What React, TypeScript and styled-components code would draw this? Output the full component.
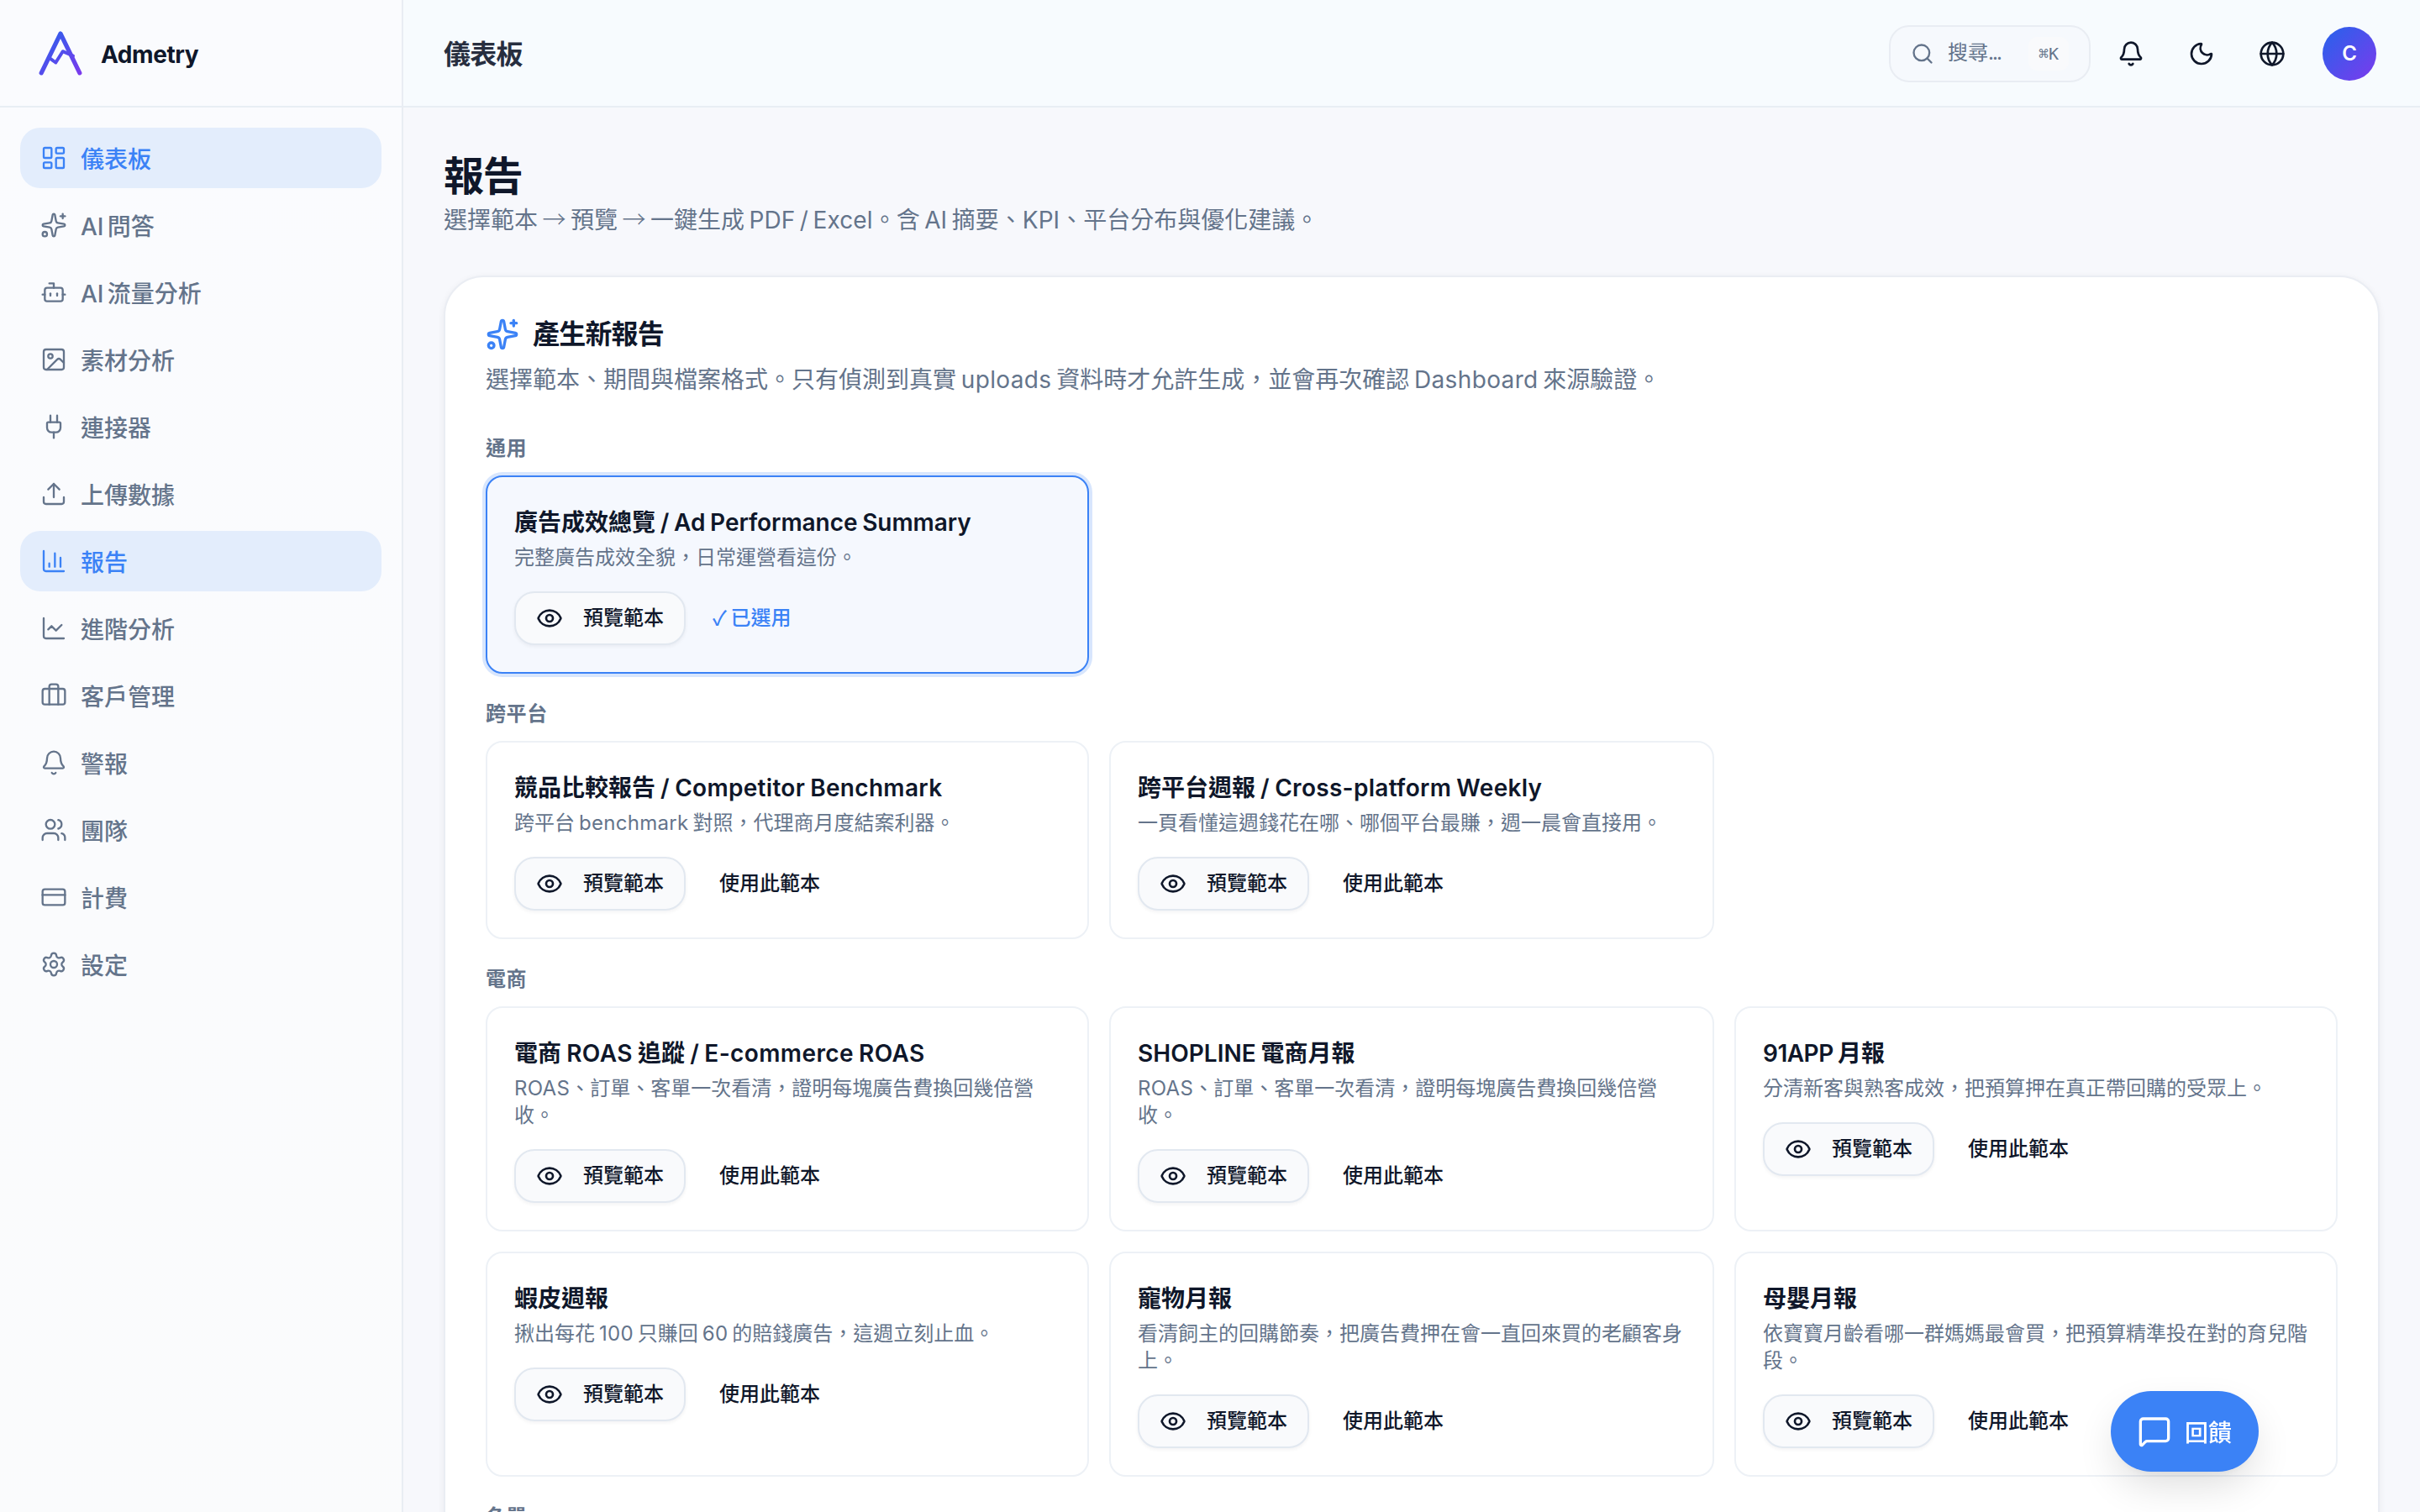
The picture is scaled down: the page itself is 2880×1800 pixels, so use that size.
import React from "react";
import styled, { createGlobalStyle, css } from "styled-components";
import {
  LayoutDashboard, Sparkles, Bot, Image, Plug, Upload, ChartColumn, ChartLine,
  Briefcase, Bell, Users, CreditCard, Settings, Search, Moon, Globe, Eye, MessageSquare,
} from "lucide-react";

const colors = {
  text: "#0f172a",
  muted: "#64748b",
  primary: "#3b82f6",
  line: "#e8eef4",
  page: "#f7f8fc",
};

const GlobalStyle = createGlobalStyle`
  *, *::before, *::after { box-sizing: border-box; }
  html, body { margin: 0; padding: 0; overflow: hidden; }
  body {
    background: ${colors.page};
    color: ${colors.text};
    font-family: Inter, "Noto Sans CJK TC", sans-serif;
    font-size: 28px;
    line-height: 40px;
    -webkit-font-smoothing: antialiased;
  }
  h1, h2, h3, p { margin: 0; }
  button { font: inherit; color: inherit; border: 0; background: none; padding: 0; }
  svg { display: block; flex-shrink: 0; }
`;

const Shell = styled.div`
  display: grid;
  grid-template-columns: 480px 1fr;
  width: 2880px;
  height: 1800px;
  overflow: hidden;
`;

const Sidebar = styled.aside`
  border-right: 2px solid #e9edf3;
  background: linear-gradient(#fafbfe, #fafbfc);
`;

const Brand = styled.div`
  display: flex;
  align-items: center;
  gap: 16px;
  height: 128px;
  padding: 0 40px;
  border-bottom: 2px solid ${colors.line};
`;

const BrandName = styled.span`
  padding-top: 4px;
  font-size: 28px;
  font-weight: 700;
  letter-spacing: -0.015em;
`;

const Nav = styled.nav`
  display: flex;
  flex-direction: column;
  gap: 8px;
  padding: 24px;
`;

const NavItem = styled.a<{ $active?: boolean }>`
  display: flex;
  align-items: center;
  gap: 16px;
  height: 72px;
  padding: 0 24px;
  border-radius: 24px;
  font-weight: 500;
  color: ${(p) => (p.$active ? colors.primary : colors.muted)};
  background: ${(p) => (p.$active ? "#e3edfc" : "transparent")};
`;

const NavLabel = styled.span`
  padding-top: 3px;
`;

const Column = styled.div`
  display: flex;
  flex-direction: column;
  min-width: 0;
`;

const Topbar = styled.header`
  display: flex;
  align-items: center;
  justify-content: space-between;
  height: 128px;
  flex-shrink: 0;
  padding: 2px 52px 0 48px;
  border-bottom: 2px solid ${colors.line};
  background: #f7fbfe;
`;

const TopTitle = styled.h2`
  padding-top: 1px;
  font-size: 32px;
  font-weight: 600;
  letter-spacing: -0.025em;
  color: #272e3f;
`;

const Tools = styled.div`
  display: flex;
  align-items: center;
  gap: 12px;
`;

const SearchBox = styled.div`
  display: flex;
  align-items: center;
  gap: 16px;
  width: 240px;
  height: 68px;
  padding: 0 24px;
  border: 2px solid #e9edf3;
  border-radius: 24px;
  background: #f6f9fd;
  color: ${colors.muted};
  font-size: 24px;
  line-height: 36px;
`;

const SearchHint = styled.span`
  padding-bottom: 2px;
`;

const Dots = styled.span`
  letter-spacing: -0.08em;
`;

const Kbd = styled.kbd`
  display: flex;
  align-items: center;
  height: 40px;
  margin-left: auto;
  padding: 0 12px;
  border-radius: 10px;
  background: #f9fafc;
  font-family: "DejaVu Sans Mono", monospace;
  font-size: 20px;
`;

const IconButton = styled.button`
  display: grid;
  place-items: center;
  width: 72px;
  height: 72px;
`;

const Avatar = styled.div`
  display: grid;
  place-items: center;
  width: 64px;
  height: 64px;
  margin-left: 12px;
  border-radius: 50%;
  background: linear-gradient(135deg, #2563eb, #7c3aed);
  color: #fff;
  font-size: 24px;
  font-weight: 600;
`;

const Main = styled.main`
  padding: 48px;
`;

const PageTitle = styled.h1`
  font-size: 48px;
  line-height: 68px;
  font-weight: 700;
  letter-spacing: -0.025em;
`;

const LatinRun = styled.span<{ $tracking: number }>`
  line-height: 0;
  letter-spacing: ${(p) => p.$tracking}em;
  word-spacing: -0.09em;
`;

const Arrow = styled.span`
  line-height: 0;
  font-family: "Noto Sans CJK TC", sans-serif;
  font-weight: 300;
`;

const Lead = styled.p`
  line-height: 36px;
  color: ${colors.muted};

  ${LatinRun} {
    font-weight: 375;
  }
`;

const Panel = styled.section`
  margin-top: 48px;
  padding: 48px;
  height: 1700px;
  border: 2px solid #eaedf3;
  border-radius: 48px;
  background: #fff;
  box-shadow: 0 2px 8px rgba(15, 23, 42, 0.06);
`;

const PanelHead = styled.div`
  display: flex;
  align-items: center;
  gap: 16px;
  height: 40px;
  color: ${colors.primary};
`;

const PanelTitle = styled.h2`
  font-size: 32px;
  font-weight: 700;
  letter-spacing: -0.025em;
  color: ${colors.text};
`;

const PanelLead = styled(Lead)`
  margin: 16px 0 48px;
`;

const Group = styled.div`
  margin-bottom: 32px;
`;

const GroupLabel = styled.h3`
  margin-bottom: 16px;
  font-size: 24px;
  line-height: 32px;
  font-weight: 600;
  letter-spacing: 0.025em;
  color: ${colors.muted};
`;

const CardGrid = styled.div`
  display: grid;
  grid-template-columns: 718fr 720fr 718fr;
  gap: 24px;
`;

const Card = styled.article<{ $selected?: boolean }>`
  padding: 32px;
  border: 2px solid #edf1f6;
  border-radius: 20px;
  background: #fff;
  ${(p) =>
    p.$selected &&
    css`
      border-color: ${colors.primary};
      background: #f5f8fe;
      box-shadow: 0 0 0 4px #d8e6fd;
    `}
`;

const CardTitle = styled.h3`
  font-size: 28px;
  line-height: 44px;
  font-weight: 600;

  ${LatinRun} {
    font-weight: 560;
    word-spacing: -0.045em;
  }
`;

const CardText = styled.p`
  margin: 4px 0 24px;
  font-size: 24px;
  line-height: 32px;
  color: ${colors.muted};

  ${LatinRun} {
    font-weight: 375;
  }
`;

const Actions = styled.div`
  display: flex;
  align-items: center;
  gap: 16px;
  font-size: 24px;
  line-height: 32px;
  font-weight: 500;
`;

const PreviewButton = styled.button`
  display: flex;
  align-items: center;
  gap: 24px;
  height: 64px;
  padding: 0 24px;
  border: 2px solid #e2e8f0;
  border-radius: 24px;
  background: #f9fafc;
  box-shadow: 0 2px 4px rgba(15, 23, 42, 0.05);
`;

const UseButton = styled.button`
  height: 64px;
  padding: 0 24px;
`;

const Chosen = styled.span`
  padding: 0 16px;
  color: ${colors.primary};
  word-spacing: -0.07em;
`;

const Tick = styled.span`
  line-height: 0;
  font-family: "Noto Sans CJK TC", "DejaVu Sans", sans-serif;
`;

const Feedback = styled.button`
  position: fixed;
  right: 192px;
  bottom: 48px;
  display: flex;
  align-items: center;
  gap: 16px;
  height: 96px;
  padding: 0 32px;
  border-radius: 48px;
  background: ${colors.primary};
  color: #fff;
  font-weight: 500;
  box-shadow: 0 20px 48px -6px rgba(0, 0, 0, 0.14), 0 8px 12px -8px rgba(0, 0, 0, 0.08);
`;

/** Splits mixed text so that the Latin parts get their own tracking. */
function Mixed({ children, tracking = 0.013 }: { children: string; tracking?: number }) {
  return (
    <>
      {children.split(/([\x20-\x7e]+|→)/).map((part, i) => {
        if (i % 2 === 0) return part;
        if (part === "→") return <Arrow key={i}>{part}</Arrow>;
        return <LatinRun key={i} $tracking={tracking}>{part}</LatinRun>;
      })}
    </>
  );
}

function Logo() {
  return (
    <svg width="64" height="64" viewBox="0 0 64 64" fill="none" strokeLinecap="round" strokeLinejoin="round">
      <defs>
        <linearGradient id="brand" x1="8" y1="5" x2="56" y2="58" gradientUnits="userSpaceOnUse">
          <stop stopColor="#2563eb" />
          <stop offset="1" stopColor="#7c3aed" />
        </linearGradient>
      </defs>
      <path d="M9.200 55.800 32 9 54.800 55.800" stroke="url(#brand)" strokeWidth="5.2" />
      <path d="M19.300 38.300 26.300 43.500 34.700 30.200 47 35.500" stroke="url(#brand)" strokeWidth="4" />
    </svg>
  );
}

const navItems = [
  { icon: LayoutDashboard, label: "儀表板", active: true },
  { icon: Sparkles, label: "AI 問答" },
  { icon: Bot, label: "AI 流量分析" },
  { icon: Image, label: "素材分析" },
  { icon: Plug, label: "連接器" },
  { icon: Upload, label: "上傳數據" },
  { icon: ChartColumn, label: "報告", active: true },
  { icon: ChartLine, label: "進階分析" },
  { icon: Briefcase, label: "客戶管理" },
  { icon: Bell, label: "警報" },
  { icon: Users, label: "團隊" },
  { icon: CreditCard, label: "計費" },
  { icon: Settings, label: "設定" },
];

type Template = { title: string; text: string; selected?: boolean; tracking?: number };

const groups: { label: string; items: Template[] }[] = [
  {
    label: "通用",
    items: [
      { title: "廣告成效總覽 / Ad Performance Summary", text: "完整廣告成效全貌，日常運營看這份。", selected: true, tracking: -0.002 },
    ],
  },
  {
    label: "跨平台",
    items: [
      { title: "競品比較報告 / Competitor Benchmark", text: "跨平台 benchmark 對照，代理商月度結案利器。", tracking: 0.011 },
      { title: "跨平台週報 / Cross-platform Weekly", text: "一頁看懂這週錢花在哪、哪個平台最賺，週一晨會直接用。", tracking: 0.011 },
    ],
  },
  {
    label: "電商",
    items: [
      { title: "電商 ROAS 追蹤 / E-commerce ROAS", text: "ROAS、訂單、客單一次看清，證明每塊廣告費換回幾倍營收。", tracking: 0.014 },
      { title: "SHOPLINE 電商月報", text: "ROAS、訂單、客單一次看清，證明每塊廣告費換回幾倍營收。", tracking: 0.001 },
      { title: "91APP 月報", text: "分清新客與熟客成效，把預算押在真正帶回購的受眾上。", tracking: -0.018 },
      { title: "蝦皮週報", text: "揪出每花 100 只賺回 60 的賠錢廣告，這週立刻止血。" },
      { title: "寵物月報", text: "看清飼主的回購節奏，把廣告費押在會一直回來買的老顧客身上。" },
      { title: "母嬰月報", text: "依寶寶月齡看哪一群媽媽最會買，把預算精準投在對的育兒階段。" },
    ],
  },
  { label: "名單", items: [] },
];

function TemplateCard({ title, text, selected, tracking }: Template) {
  return (
    <Card $selected={selected}>
      <CardTitle><Mixed tracking={tracking}>{title}</Mixed></CardTitle>
      <CardText><Mixed>{text}</Mixed></CardText>
      <Actions>
        <PreviewButton>
          <Eye size={32} strokeWidth={2} />
          預覽範本
        </PreviewButton>
        {selected ? <Chosen><Tick>✓</Tick> 已選用</Chosen> : <UseButton>使用此範本</UseButton>}
      </Actions>
    </Card>
  );
}

export default function App() {
  return (
    <>
      <GlobalStyle />
      <Shell lang="zh-Hant">
        <Sidebar>
          <Brand>
            <Logo />
            <BrandName>Admetry</BrandName>
          </Brand>
          <Nav>
            {navItems.map(({ icon: Icon, label, active }) => (
              <NavItem key={label} $active={active}>
                <Icon size={32} strokeWidth={1.75} />
                <NavLabel><Mixed tracking={-0.008}>{label}</Mixed></NavLabel>
              </NavItem>
            ))}
          </Nav>
        </Sidebar>
        <Column>
          <Topbar>
            <TopTitle>儀表板</TopTitle>
            <Tools>
              <SearchBox>
                <Search size={28} />
                <SearchHint>搜尋<Dots>...</Dots></SearchHint>
                <Kbd>⌘K</Kbd>
              </SearchBox>
              <IconButton><Bell size={32} /></IconButton>
              <IconButton><Moon size={32} /></IconButton>
              <IconButton><Globe size={32} /></IconButton>
              <Avatar>C</Avatar>
            </Tools>
          </Topbar>
          <Main>
            <PageTitle>報告</PageTitle>
            <Lead><Mixed tracking={0.004}>選擇範本 → 預覽 → 一鍵生成 PDF / Excel。含 AI 摘要、KPI、平台分布與優化建議。</Mixed></Lead>
            <Panel>
              <PanelHead>
                <Sparkles size={40} />
                <PanelTitle>產生新報告</PanelTitle>
              </PanelHead>
              <PanelLead><Mixed>選擇範本、期間與檔案格式。只有偵測到真實 uploads 資料時才允許生成，並會再次確認 Dashboard 來源驗證。</Mixed></PanelLead>
              {groups.map((g) => (
                <Group key={g.label}>
                  <GroupLabel>{g.label}</GroupLabel>
                  <CardGrid>
                    {g.items.map((t) => <TemplateCard key={t.title} {...t} />)}
                  </CardGrid>
                </Group>
              ))}
            </Panel>
          </Main>
        </Column>
      </Shell>
      <Feedback>
        <MessageSquare size={40} />
        <NavLabel>回饋</NavLabel>
      </Feedback>
    </>
  );
}
